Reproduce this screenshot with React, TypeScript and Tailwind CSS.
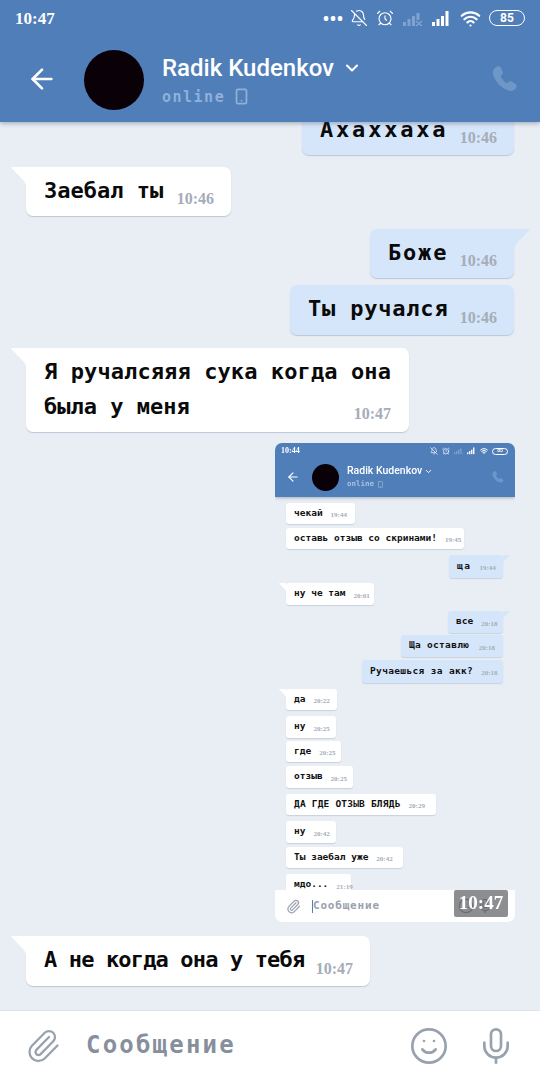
import React from 'react';
import { AlarmClock, ArrowLeft, BellOff, ChevronDown, Mic, Paperclip, Smartphone, Smile, Wifi } from 'lucide-react';

const pixelFont = "font-['DejaVu_Sans_Mono',monospace] font-bold";
const timeFont = "font-['Liberation_Serif',serif] font-bold";

const Signal = ({ className, size = 20, cross = false }: { className?: string; size?: number; cross?: boolean }) => (
  <svg width={size} height={size * 0.8} viewBox="0 0 20 16" className={className} fill="currentColor">
    <rect x="0" y="12" width="3" height="4" />
    <rect x="4.5" y="9" width="3" height="7" />
    <rect x="9" y="6" width="3" height="10" />
    <rect x="13.5" y={cross ? 3 : 1} width="3" height={cross ? 7 : 15} />
    {cross && <path d="M13 11l6 5M19 11l-6 5" stroke="currentColor" strokeWidth="1.5" />}
  </svg>
);

const PhoneFilled = ({ size, className }: { size: number; className?: string }) => (
  <svg width={size} height={size} viewBox="0 0 26 26" className={className} fill="currentColor">
    <path d="M5 0.5c1.6-.8 3.2-.3 4 1.4l1.6 3.6c.6 1.3.3 2.6-.8 3.5l-1.3 1c1 2.8 3.6 5.8 6.6 7.2l1.4-1.2c1-.9 2.3-1 3.5-.3l3.2 2c1.5 1 1.9 2.6 1 4-1.2 2-3.3 3.6-5.6 3.3C10.500 24 1.600 14.500.8 7 .5 4.300 2.500 1.700 5 .5z" />
  </svg>
);

type Msg = {
  text: string;
  time: string;
  out?: boolean;
  tail?: boolean;
  box: string; // width, height, top margin and letter spacing
};

const mainMessages: Msg[] = [
  { text: 'Ахаххаха', time: '10:46', out: true, box: 'w-[212px] h-[49px] mt-[-16px] tracking-[2.800px]' },
  { text: 'Заебал ты', time: '10:46', tail: true, box: 'w-[205px] h-[49px] mt-[12px]' },
  { text: 'Боже', time: '10:46', out: true, tail: true, box: 'w-[144px] h-[49px] mt-[13px] tracking-[1.800px]' },
  { text: 'Ты ручался', time: '10:46', out: true, box: 'w-[224px] h-[50px] mt-[7px] tracking-[0.800px]' },
];

const innerTop: Msg[] = [
  { text: 'чекай', time: '19:44', box: 'w-[69px] h-[21px] mt-[6px]' },
  { text: 'оставь отзыв со скринами!', time: '19:45', box: 'w-[178px] h-[21px] mt-[4px]' },
  { text: 'ща', time: '19:44', out: true, tail: true, box: 'w-[54px] h-[23px] mt-[6px] tracking-[1.500px]' },
  { text: 'ну че там', time: '20:01', tail: true, box: 'w-[88px] h-[22px] mt-[5px]' },
  { text: 'все', time: '20:18', out: true, tail: true, box: 'w-[55px] h-[22px] mt-[6px]' },
  { text: 'Ща оставлю', time: '20:18', out: true, box: 'w-[102px] h-[22px] mt-[2px] tracking-[0.300px]' },
  { text: 'Ручаешься за акк?', time: '20:18', out: true, box: 'w-[141px] h-[23px] mt-[3px] tracking-[0.350px]' },
  { text: 'да', time: '20:22', tail: true, box: 'w-[51px] h-[21px] mt-[6px]' },
  { text: 'ну', time: '20:25', box: 'w-[50px] h-[22px] mt-[6px]' },
  { text: 'где', time: '20:25', box: 'w-[55px] h-[21px] mt-[3px]' },
  { text: 'отзыв', time: '20:25', box: 'w-[67px] h-[22px] mt-[4px]' },
  { text: 'ДА ГДЕ ОТЗЫВ БЛЯДЬ', time: '20:29', box: 'w-[150px] h-[21px] mt-[6px] tracking-[0.200px]' },
  { text: 'ну', time: '20:42', box: 'w-[50px] h-[22px] mt-[6px]' },
  { text: 'Ты заебал уже', time: '20:42', box: 'w-[117px] h-[21px] mt-[4px]' },
  { text: 'мдо...', time: '21:19', box: 'w-[65px] h-[22px] mt-[6px]' },
];

const Tail = ({ out, small }: { out?: boolean; small?: boolean }) => {
  const w = small ? 7 : 16;
  const h = small ? 9 : 21;
  return (
    <svg
      width={w}
      height={h}
      viewBox="0 0 16 21"
      className={`absolute top-0 ${out ? (small ? 'right-[-7px]' : 'right-[-16px]') : small ? 'left-[-7px]' : 'left-[-15px]'} ${out ? 'text-[#d6e6fa]' : 'text-white'}`}
    >
      {out ? (
        <path d="M0 0H15.500Q16 .5 15.500 1L3 14Q1 17 0 21Z" fill="currentColor" />
      ) : (
        <path d="M16 0H.5Q0 .5 .5 1L13 14Q15 17 16 21Z" fill="currentColor" />
      )}
    </svg>
  );
};

const Bubble = ({ m }: { m: Msg }) => (
  <div
    className={`relative flex shrink-0 items-center justify-between rounded-b-[7px] pl-[18px] pr-[17px] shadow-[0_1px_1px_rgba(150,170,195,0.55)] ${m.tail ? '' : 'rounded-t-[7px]'} ${
      m.tail ? (m.out ? 'rounded-tl-[7px]' : 'rounded-tr-[7px]') : ''
    } ${m.out ? 'mr-[26px] self-end bg-[#d6e6fa]' : 'ml-[26px] self-start bg-white'} ${m.box}`}
  >
    {m.tail && <Tail out={m.out} />}
    <span className={`${pixelFont} -mt-[2px] whitespace-nowrap text-[22px] leading-[28px] text-[#0a0a0a]`}>{m.text}</span>
    <span className={`${timeFont} mt-[15px] text-[16px] leading-[18px] tracking-normal text-[#a4adb8]`}>{m.time}</span>
  </div>
);

const InnerBubble = ({ m }: { m: Msg }) => (
  <div
    className={`relative flex shrink-0 items-center gap-[8px] rounded-[3px] pl-[8px] shadow-[0_1px_1px_rgba(150,170,195,0.4)] ${
      m.out ? 'mr-[12px] justify-between self-end bg-[#d6e6fa] pr-[8px]' : 'ml-[11px] self-start bg-white'
    } ${m.box}`}
  >
    {m.tail && <Tail out={m.out} small />}
    <span className={`${pixelFont} -mt-[2px] whitespace-nowrap text-[9.500px] leading-[12px] text-[#111]`}>{m.text}</span>
    <span className={`${timeFont} mt-[3px] text-[7px] leading-[8px] tracking-normal text-[#a4adb8]`}>{m.time}</span>
  </div>
);

const InnerScreenshot = () => (
  <div className="relative ml-[275px] mt-[11px] flex h-[479px] w-[240px] shrink-0 flex-col overflow-hidden rounded-t-[7px] rounded-b-[7px] bg-[#e9eef4] blur-[0.4px]">
    <div className="relative z-10 h-[54px] shrink-0 bg-[#507eb8] shadow-[0_1px_3px_rgba(60,80,110,0.4)]">
      <div className="flex h-[14px] items-center justify-between pl-[6px] pr-[7px] pt-[2px] text-white">
        <span className={`${timeFont} text-[8px]`}>10:44</span>
        <div className="flex items-center gap-[4px]">
          <BellOff size={8} />
          <AlarmClock size={8} />
          <Signal size={9} cross className="text-[#7fa2cf]" />
          <Signal size={9} />
          <Wifi size={8} strokeWidth={3} />
          <span className="flex h-[7px] w-[16px] items-center justify-center rounded-full border border-white font-['Roboto',sans-serif] text-[5px] font-bold">85</span>
        </div>
      </div>
      <div className="flex h-[40px] items-center pl-[11px]">
        <ArrowLeft size={14} strokeWidth={2} className="text-white" />
        <div className="ml-[12px] h-[27px] w-[27px] rounded-full bg-[#0a0008]" />
        <div className="ml-[8px] flex flex-col">
          <div className="flex items-center gap-[2px] font-['Roboto',sans-serif] text-[10.500px] font-medium leading-[14px] text-white">
            Radik Kudenkov
            <ChevronDown size={9} strokeWidth={2.5} />
          </div>
          <div className="flex items-center gap-[3px] text-[#a5c0e0]">
            <span className={`${pixelFont} text-[7.500px] leading-[12px]`}>online</span>
            <Smartphone size={7} />
          </div>
        </div>
        <PhoneFilled size={12} className="ml-auto mr-[11px] text-[#6e97c8]" />
      </div>
    </div>
    <div className="flex min-h-0 flex-1 flex-col overflow-hidden">
      {innerTop.map((m, i) => (
        <InnerBubble key={i} m={m} />
      ))}
    </div>
    <div className="flex h-[32px] shrink-0 items-center rounded-b-[7px] bg-white pl-[11px]">
      <Paperclip size={15} className="text-[#9aa3af]" />
      <span className="ml-[11px] h-[13px] w-px bg-[#5181b8]" />
      <span className={`${pixelFont} text-[11px] tracking-[0.800px] text-[#98a1ad]`}>Сообщение</span>
      <div className="ml-[78px] flex items-center gap-[3px] text-[#5c6168]">
        <Smile size={16} />
        <Mic size={16} />
      </div>
    </div>
  </div>
);

export default function App() {
  return (
    <div className="relative flex h-[1080px] w-[540px] flex-col overflow-hidden bg-[#e9eef4]">
      <header className="relative z-10 h-[122px] shrink-0 bg-[#507eb8] shadow-[0_2px_4px_rgba(60,80,110,0.35)]">
        <div className="flex h-[36px] items-center justify-between pl-[15px] pr-[15px] text-white">
          <span className={`${timeFont} text-[17px] leading-none`}>10:47</span>
          <div className="flex items-center">
            <span className="text-[16px] font-bold leading-none tracking-[1px]">•••</span>
            <BellOff size={18} strokeWidth={1.5} className="ml-[6px]" />
            <AlarmClock size={18} strokeWidth={1.5} className="ml-[8px]" />
            <Signal cross className="ml-[9px] text-[#7fa2cf]" />
            <Signal className="ml-[9px]" />
            <Wifi size={21} strokeWidth={2.5} className="ml-[8px]" />
            <span className="ml-[8px] flex h-[16px] w-[36px] items-center justify-center rounded-full border-[1.5px] border-white font-['Roboto',sans-serif] text-[12px] font-bold leading-none">
              85
            </span>
          </div>
        </div>
        <div className="flex h-[86px] items-center pl-[26px]">
          <ArrowLeft size={32} strokeWidth={2} className="text-white" />
          <div className="ml-[26px] mt-[1px] h-[60px] w-[60px] shrink-0 rounded-full bg-[#0a0008]" />
          <div className="ml-[18px] mt-[3px] flex flex-col">
            <div className="flex items-center gap-[8px] font-['Roboto',sans-serif] text-[24px] font-medium leading-[30px] text-white">
              Radik Kudenkov
              <ChevronDown size={20} strokeWidth={2.5} />
            </div>
            <div className="mt-[2px] flex items-center gap-[8px] text-[#8fb0d8]">
              <span className={`${pixelFont} text-[15px] leading-[24px] tracking-[1.500px]`}>online</span>
              <Smartphone size={17} strokeWidth={2.5} />
            </div>
          </div>
          <PhoneFilled size={26} className="ml-auto mr-[22px] text-[#6e97c8]" />
        </div>
      </header>

      <main className="flex min-h-0 flex-1 flex-col">
        {mainMessages.map((m, i) => (
          <Bubble key={i} m={m} />
        ))}

        <div className="relative ml-[26px] mt-[13px] h-[84px] w-[383px] shrink-0 self-start rounded-b-[7px] rounded-tr-[7px] bg-white pl-[18px] pt-[6px] shadow-[0_1px_1px_rgba(150,170,195,0.55)]">
          <Tail />
          <div className={`${pixelFont} text-[22px] leading-[35px] text-[#0a0a0a]`}>
            <div className="whitespace-nowrap tracking-[0.1px]">Я ручалсяяя сука когда она</div>
            <div className="flex items-center justify-between pr-[18px]">
              <span className="whitespace-nowrap">была у меня</span>
              <span className={`${timeFont} mt-[14px] text-[16px] leading-[18px] text-[#a4adb8]`}>10:47</span>
            </div>
          </div>
        </div>

        <div className="relative shrink-0">
          <InnerScreenshot />
          <div className="absolute left-[454px] top-[458px] z-10 flex h-[27px] w-[54px] items-center justify-center rounded-[2px] bg-[#6f7275]/80">
            <span className={`${timeFont} text-[19px] text-white`}>10:47</span>
          </div>
        </div>

        <Bubble m={{ text: 'А не когда она у тебя', time: '10:47', tail: true, box: 'w-[344px] h-[50px] mt-[14px] tracking-[-0.850px]' }} />
      </main>

      <footer className="flex h-[70px] shrink-0 items-center border-t border-[#dfe4ea] bg-white pl-[25px] pr-[25px]">
        <Paperclip size={36} strokeWidth={1.5} className="text-[#98a1ad]" />
        <span className={`${pixelFont} -mt-[2px] ml-[25px] text-[24px] tracking-[2.200px] text-[#868f9b]`}>Сообщение</span>
        <Smile size={40} strokeWidth={1.6} className="ml-auto text-[#98a1ad]" />
        <Mic size={40} strokeWidth={1.6} className="ml-[27px] mr-[-1px] text-[#98a1ad]" />
      </footer>
    </div>
  );
}
